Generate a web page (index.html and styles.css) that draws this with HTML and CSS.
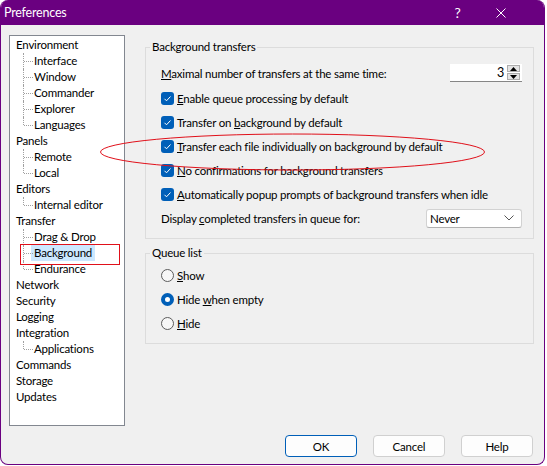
FILE: index.html
```html
<!DOCTYPE html>
<html lang="en">
<head>
    <meta charset="UTF-8">
    <title>Preferences</title>
    <link rel="stylesheet" href="styles.css">
</head>
<body>
    <div class="window">
        <div class="titlebar">
            <span class="title">Preferences</span>
            <span class="caption-btn help">?</span>
            <span class="caption-btn close">
                <svg width="10" height="10" viewBox="0 0 10 10"><path d="M0.5 0.5 L9.5 9.5 M9.5 0.5 L0.5 9.5" stroke="#fff" stroke-width="1"/></svg>
            </span>
        </div>

        <div class="main">
            <ul class="tree">
                <li>Environment
                    <ul class="sub">
                        <li>Interface</li>
                        <li>Window</li>
                        <li>Commander</li>
                        <li>Explorer</li>
                        <li>Languages</li>
                    </ul>
                </li>
                <li>Panels
                    <ul class="sub">
                        <li>Remote</li>
                        <li>Local</li>
                    </ul>
                </li>
                <li>Editors
                    <ul class="sub">
                        <li>Internal editor</li>
                    </ul>
                </li>
                <li>Transfer
                    <ul class="sub">
                        <li>Drag &amp; Drop</li>
                        <li><span class="selected">Background</span></li>
                        <li>Endurance</li>
                    </ul>
                </li>
                <li>Network</li>
                <li>Security</li>
                <li>Logging</li>
                <li>Integration
                    <ul class="sub">
                        <li>Applications</li>
                    </ul>
                </li>
                <li>Commands</li>
                <li>Storage</li>
                <li>Updates</li>
            </ul>

            <div class="pages">
                <fieldset class="group">
                    <legend>Background transfers</legend>
                    <div class="rows">
                        <div class="row first">
                            <span><u>M</u>aximal number of transfers at the same time:</span>
                            <div class="spin">
                                <span class="spin-value">3</span>
                                <span class="spin-btns">
                                    <span class="spin-btn"><svg width="7" height="4" viewBox="0 0 7 4"><path d="M0 4 L3.5 0 L7 4 Z" fill="#000"/></svg></span>
                                    <span class="spin-btn"><svg width="7" height="4" viewBox="0 0 7 4"><path d="M0 0 L3.5 4 L7 0 Z" fill="#000"/></svg></span>
                                </span>
                            </div>
                        </div>
                        <label class="row"><span class="check"></span><span><u>E</u>nable queue processing by default</span></label>
                        <label class="row"><span class="check"></span><span>Transfer on <u>b</u>ackground by default</span></label>
                        <label class="row"><span class="check"></span><span><u>T</u>ransfer each file individually on background by default</span></label>
                        <label class="row"><span class="check"></span><span><u>N</u>o confirmations for background transfers</span></label>
                        <label class="row"><span class="check"></span><span><u>A</u>utomatically popup prompts of background transfers when idle</span></label>
                        <div class="row">
                            <span>Display <u>c</u>ompleted transfers in queue for:</span>
                            <div class="combo">
                                <span>Never</span>
                                <svg width="10" height="6" viewBox="0 0 10 6"><path d="M0.5 0.5 L5 5 L9.5 0.5" fill="none" stroke="#555" stroke-width="1"/></svg>
                            </div>
                        </div>
                    </div>
                </fieldset>

                <fieldset class="group queue">
                    <legend>Queue list</legend>
                    <div class="rows">
                        <label class="row"><span class="radio"></span><span><u>S</u>how</span></label>
                        <label class="row"><span class="radio on"></span><span>Hide <u>w</u>hen empty</span></label>
                        <label class="row"><span class="radio"></span><span><u>H</u>ide</span></label>
                    </div>
                </fieldset>
            </div>
        </div>

        <div class="buttons">
            <button class="btn default">OK</button>
            <button class="btn">Cancel</button>
            <button class="btn">Help</button>
        </div>

        <!-- red annotation marks drawn over the dialog -->
        <div class="mark-box"></div>
        <svg class="mark-ellipse" width="547" height="466" viewBox="0 0 547 466">
            <ellipse cx="292.5" cy="152" rx="192" ry="18" fill="none" stroke="#e0101a" stroke-width="1"/>
        </svg>
    </div>
</body>
</html>
```

FILE: styles.css
```css
body {
    margin: 0;
    background: #fff;
    font-family: Lato, "Noto Sans", sans-serif;
    font-size: 11.5px;
    letter-spacing: -0.2px;
    color: #000;
}
.window {
    position: relative;
    width: 545px;
    height: 465px;
    box-sizing: border-box;
    border: 1px solid #6a0080;
    border-top: none;
    border-radius: 8px;
    background: #f0f0f0;
    display: flex;
    flex-direction: column;
    overflow: hidden;
}
.titlebar {
    height: 25px;
    background: #6a0080;
    color: #fff;
    display: flex;
    align-items: center;
    padding-left: 3px;
    font-size: 12.5px;
}
.title {
    flex: 1;
}
.caption-btn {
    display: flex;
    justify-content: center;
    align-items: center;
    width: 43px;
    height: 25px;
}
.help {
    font-size: 14px;
}
.close {
    width: 44px;
    margin-right: 21px;
}

.main {
    display: flex;
    padding: 10px 10px 0 8px;
}
.tree {
    list-style: none;
    margin: 0;
    padding: 1px 0 0 6px;
    width: 116px;
    height: 391px;
    box-sizing: border-box;
    background: #fff;
    border: 1px solid #828790;
    line-height: 16px;
}
.sub {
    list-style: none;
    margin: 0;
    padding: 0;
}
.sub li {
    position: relative;
    padding-left: 18px;
}
/* dotted tree connectors */
.sub li::before {
    content: "";
    position: absolute;
    left: 7px;
    top: 0;
    bottom: 0;
    border-left: 1px dotted #a0a0a0;
}
.sub li:last-child::before {
    bottom: 8px;
}
.sub li::after {
    content: "";
    position: absolute;
    left: 8px;
    top: 8px;
    width: 9px;
    border-top: 1px dotted #a0a0a0;
}
.selected {
    background: #cce8ff;
    padding: 0 3px;
    margin-left: -3px;
    display: inline-block;
}

.pages {
    flex: 1;
    margin-left: 20px;
    padding-top: 4px;
}
.group {
    margin: 0;
    padding: 0 4px;
    border: 1px solid #dcdcdc;
    min-width: 0;
}
.group legend {
    padding: 0 2px;
    line-height: 16px;
}
.rows {
    padding: 6px 7px 8px 11px;
}
.row {
    display: flex;
    align-items: center;
    height: 24px;
}
.row.first {
    height: 24px;
    margin-bottom: 1px;
    justify-content: space-between;
}
.row .check,
.row .radio {
    margin-right: 3px;
}
.check {
    width: 13px;
    height: 13px;
    box-sizing: border-box;
    border-radius: 3px;
    background: #005fb8 url("data:image/svg+xml,%3Csvg xmlns='http://www.w3.org/2000/svg' width='13' height='13'%3E%3Cpath d='M3.5 6.8 L5.5 8.8 L9.5 4.5' fill='none' stroke='white' stroke-width='1'/%3E%3C/svg%3E") no-repeat center;
}
.radio {
    width: 13px;
    height: 13px;
    box-sizing: border-box;
    border-radius: 50%;
    border: 1px solid #5c5c5c;
    background: #f7f7f7;
}
.radio.on {
    border: 4px solid #005fb8;
    background: #fff;
}

.spin {
    display: flex;
    align-items: center;
    width: 72px;
    height: 18px;
    box-sizing: border-box;
    background: #fff;
    border-bottom: 1px solid #868686;
    font-size: 12.5px;
}
.spin-value {
    flex: 1;
    text-align: right;
    padding-right: 3px;
}
.spin-btns {
    display: flex;
    flex-direction: column;
    gap: 1px;
    margin-right: 2px;
}
.spin-btn {
    display: flex;
    justify-content: center;
    align-items: center;
    width: 13px;
    height: 7px;
    box-sizing: border-box;
    background: #e4e4e4;
    border: 1px solid #acacac;
}

.row .combo {
    margin-left: auto;
}
.combo {
    display: flex;
    align-items: center;
    justify-content: space-between;
    width: 96px;
    height: 19px;
    box-sizing: border-box;
    padding: 0 7px 0 3px;
    background: #fff;
    border: 1px solid #d2d2d2;
    border-bottom-color: #b0b0b0;
    border-radius: 3px;
}

.queue {
    margin-top: 6px;
}
.queue .rows {
    padding-top: 2px;
}

.buttons {
    display: flex;
    justify-content: flex-end;
    gap: 16px;
    padding: 9px 11px 0 0;
}
.btn {
    width: 72px;
    height: 22px;
    font: inherit;
    letter-spacing: inherit;
    color: #000;
    background: #fdfdfd;
    border: 1px solid #d0d0d0;
    border-radius: 4px;
    padding: 0;
}
.btn.default {
    border-color: #005fb8;
}

.mark-box {
    position: absolute;
    left: 19px;
    top: 244px;
    width: 100px;
    height: 21px;
    box-sizing: border-box;
    border: 1px solid #e0101a;
}
.mark-ellipse {
    position: absolute;
    left: -1px;
    top: 0;
    pointer-events: none;
}
```
